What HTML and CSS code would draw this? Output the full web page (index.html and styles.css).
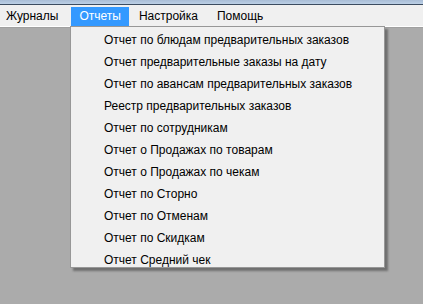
FILE: index.html
```html
<!DOCTYPE html>
<html>
<head>
<meta charset="utf-8">
<link rel="stylesheet" href="styles.css">
</head>
<body>
<div class="window">
  <div class="titlebar"></div>
  <div class="menubar">
    <div class="mi first">Журналы</div>
    <div class="mi active">Отчеты</div>
    <div class="mi">Настройка</div>
    <div class="mi">Помощь</div>
  </div>
  <div class="client"></div>
  <div class="dropdown">
    <div class="item">Отчет по блюдам предварительных заказов</div>
    <div class="item">Отчет предварительные заказы на дату</div>
    <div class="item">Отчет по авансам предварительных заказов</div>
    <div class="item">Реестр предварительных заказов</div>
    <div class="item">Отчет по сотрудникам</div>
    <div class="item">Отчет о Продажах по товарам</div>
    <div class="item">Отчет о Продажах по чекам</div>
    <div class="item">Отчет по Сторно</div>
    <div class="item">Отчет по Отменам</div>
    <div class="item">Отчет по Скидкам</div>
    <div class="item">Отчет Средний чек</div>
  </div>
</div>
</body>
</html>
```
FILE: styles.css
```css
html, body {
  margin: 0;
  padding: 0;
  width: 423px;
  height: 304px;
  overflow: hidden;
  background: #ababab;
  font-family: "Liberation Sans", Arial, sans-serif;
  font-size: 12px;
  color: #000;
}
.window {
  position: relative;
  width: 423px;
  height: 304px;
}
.titlebar {
  height: 4px;
  background: linear-gradient(#a9bdd6, #bcd0e6);
  border-bottom: 1px solid #3c4c60;
}
.menubar {
  height: 21px;
  background: #f0f0f0;
  border-bottom: 1px solid #ffffff;
  display: flex;
  align-items: flex-end;
  gap: 0;
}
.mi {
  height: 19px;
  line-height: 18px;
  padding: 0 9px 0 10px;
}
.mi.first {
  padding: 0 10px 0 6px;
}
.active {
  background: #3399ff;
  color: #fff;
  margin-left: 3px;
  padding: 0 8px 0 8px;
}
.client {
  height: 1px;
  background: #a0a0a0;
}
.dropdown {
  position: absolute;
  left: 70px;
  top: 26px;
  width: 315px;
  height: 242px;
  box-sizing: border-box;
  background: #f0f0f0;
  border: 1px solid #979797;
  box-shadow: 3px 3px 2px rgba(0,0,0,0.35);
  padding-top: 2px;
}
.item {
  height: 22px;
  line-height: 22px;
  padding-left: 33px;
  white-space: nowrap;
}
```
